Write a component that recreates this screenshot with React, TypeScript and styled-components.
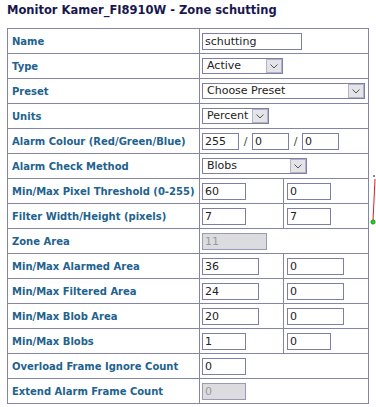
import React from 'react';
import styled, { createGlobalStyle } from 'styled-components';

const GlobalStyle = createGlobalStyle`
  body {
    margin: 0;
    background: #ffffff;
    font-family: "DejaVu Sans", Verdana, sans-serif;
  }
`;

const Page = styled.div`
  position: relative;
  width: 376px;
  height: 407px;
  padding: 0 7px;
  box-sizing: border-box;
  overflow: hidden;
`;

const Title = styled.h2`
  margin: 0 0 10px 0;
  padding-top: 2px;
  font-size: 11.5px;
  line-height: 16px;
  font-weight: bold;
  color: #18184e;
  white-space: nowrap;
`;

const Table = styled.table`
  border-collapse: collapse;
  width: 362px;
  table-layout: fixed;
`;

const Row = styled.tr`
  height: 25px;
`;

const LabelCell = styled.th`
  width: 187px;
  border: 1px solid #8585a8;
  padding: 0 0 0 4px;
  text-align: left;
  font-size: 10px;
  font-weight: bold;
  color: #22628e;
  white-space: nowrap;
  overflow: hidden;
`;

const ValueCell = styled.td<{ $inset?: number }>`
  border: 1px solid #8585a8;
  padding: 0 0 0 ${p => p.$inset ?? 2}px;
  font-size: 11px;
  color: #222;
  white-space: nowrap;
  vertical-align: middle;
`;

const TextInput = styled.input<{ $w: number }>`
  box-sizing: border-box;
  width: ${p => p.$w}px;
  height: 17px;
  margin: 0;
  padding: 0 2px;
  border: 1px solid #7f7fa5;
  font-family: "DejaVu Sans", Verdana, sans-serif;
  font-size: 11px;
  color: #222;
  background: #fff;
  vertical-align: middle;

  &:disabled {
    background: #dcdce0;
    border-color: #9a9ab4;
    color: #9a9a9a;
  }
`;

const Slash = styled.span`
  display: inline-block;
  width: 13px;
  text-align: center;
  color: #444;
  vertical-align: middle;
`;

const SelectBox = styled.div<{ $w: number }>`
  box-sizing: border-box;
  display: inline-flex;
  align-items: stretch;
  width: ${p => p.$w}px;
  height: 16px;
  border: 1px solid #7f7fa5;
  background: #fff;
  vertical-align: middle;
`;

const SelectText = styled.span`
  flex: 1;
  padding-left: 4px;
  font-size: 11px;
  line-height: 14px;
  color: #222;
  overflow: hidden;
`;

const SelectArrow = styled.span`
  box-sizing: border-box;
  width: 16px;
  display: flex;
  align-items: center;
  justify-content: center;
  background: #e4e4e8;
  border: 1px solid #b4b4c4;
`;

const Marker = styled.svg`
  position: absolute;
  right: 0;
  top: 173px;
`;

const Select: React.FC<{ w: number; value: string }> = ({ w, value }) => (
  <SelectBox $w={w}>
    <SelectText>{value}</SelectText>
    <SelectArrow>
      <svg width="8" height="5" viewBox="0 0 8 5">
        <path d="M0.5 0.5 L4 4 L7.5 0.5" fill="none" stroke="#555" strokeWidth="1" />
      </svg>
    </SelectArrow>
  </SelectBox>
);

type Pair = { label: string; a: string; b: string; w: number };

const pairs: Pair[] = [
  { label: 'Min/Max Pixel Threshold (0-255)', a: '60', b: '0', w: 44 },
  { label: 'Filter Width/Height (pixels)', a: '7', b: '7', w: 44 },
];

const areas: Pair[] = [
  { label: 'Min/Max Alarmed Area', a: '36', b: '0', w: 57 },
  { label: 'Min/Max Filtered Area', a: '24', b: '0', w: 57 },
  { label: 'Min/Max Blob Area', a: '20', b: '0', w: 57 },
  { label: 'Min/Max Blobs', a: '1', b: '0', w: 44 },
];

const PairRow: React.FC<{ p: Pair }> = ({ p }) => (
  <Row>
    <LabelCell>{p.label}</LabelCell>
    <ValueCell>
      <TextInput $w={p.w} defaultValue={p.a} />
    </ValueCell>
    <ValueCell $inset={3}>
      <TextInput $w={p.w} defaultValue={p.b} />
    </ValueCell>
  </Row>
);

export default function App() {
  return (
    <Page>
      <GlobalStyle />
      <Title>Monitor Kamer_FI8910W - Zone schutting</Title>
      <Table>
        <colgroup>
          <col style={{ width: 192 }} />
          <col style={{ width: 84 }} />
          <col />
        </colgroup>
        <tbody>
          <Row>
            <LabelCell>Name</LabelCell>
            <ValueCell colSpan={2}>
              <TextInput $w={100} defaultValue="schutting" />
            </ValueCell>
          </Row>
          <Row>
            <LabelCell>Type</LabelCell>
            <ValueCell colSpan={2}>
              <Select w={81} value="Active" />
            </ValueCell>
          </Row>
          <Row>
            <LabelCell>Preset</LabelCell>
            <ValueCell colSpan={2}>
              <Select w={163} value="Choose Preset" />
            </ValueCell>
          </Row>
          <Row>
            <LabelCell>Units</LabelCell>
            <ValueCell colSpan={2}>
              <Select w={67} value="Percent" />
            </ValueCell>
          </Row>
          <Row>
            <LabelCell>Alarm Colour (Red/Green/Blue)</LabelCell>
            <ValueCell colSpan={2}>
              <TextInput $w={37} defaultValue="255" />
              <Slash>/</Slash>
              <TextInput $w={37} defaultValue="0" />
              <Slash>/</Slash>
              <TextInput $w={37} defaultValue="0" />
            </ValueCell>
          </Row>
          <Row>
            <LabelCell>Alarm Check Method</LabelCell>
            <ValueCell colSpan={2}>
              <Select w={105} value="Blobs" />
            </ValueCell>
          </Row>
          {pairs.map(p => (
            <PairRow key={p.label} p={p} />
          ))}
          <Row>
            <LabelCell>Zone Area</LabelCell>
            <ValueCell colSpan={2}>
              <TextInput $w={65} defaultValue="11" disabled />
            </ValueCell>
          </Row>
          {areas.map(p => (
            <PairRow key={p.label} p={p} />
          ))}
          <Row>
            <LabelCell>Overload Frame Ignore Count</LabelCell>
            <ValueCell colSpan={2}>
              <TextInput $w={44} defaultValue="0" />
            </ValueCell>
          </Row>
          <Row>
            <LabelCell>Extend Alarm Frame Count</LabelCell>
            <ValueCell colSpan={2}>
              <TextInput $w={44} defaultValue="0" disabled />
            </ValueCell>
          </Row>
        </tbody>
      </Table>
      <Marker width="6" height="54" viewBox="0 0 6 54">
        <line x1="3" y1="3" x2="5" y2="3" stroke="#111" strokeWidth="1" />
        <line x1="5" y1="6" x2="3" y2="48" stroke="#e02020" strokeWidth="1" />
        <circle cx="3" cy="49" r="2.2" fill="#22cc22" stroke="#118811" strokeWidth="0.6" />
      </Marker>
    </Page>
  );
}
